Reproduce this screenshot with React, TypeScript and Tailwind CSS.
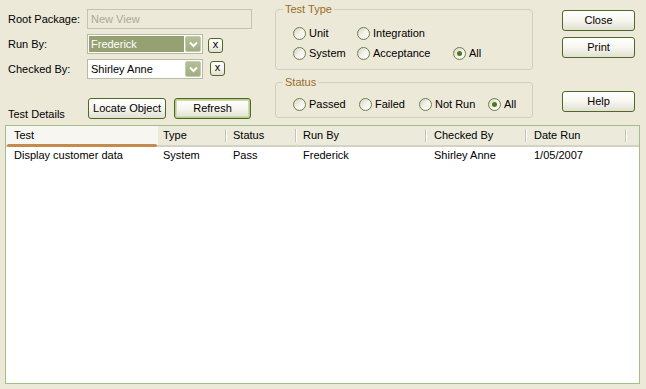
import React from 'react';

const Radio = ({ label, checked, className = '' }: { label: string; checked?: boolean; className?: string }) => (
  <div className={`flex items-center h-[14px] gap-[3px] shrink-0 ${className}`}>
    <span className="w-[13px] h-[13px] shrink-0 rounded-full border border-[#6a8248] bg-gradient-to-br from-[#d6d3c3] via-[#f3f2ec] to-white flex items-center justify-center">
      {checked && <span className="w-[5px] h-[5px] rounded-full bg-[#4b7a1c]" />}
    </span>
    <span className="leading-[13px] whitespace-nowrap">{label}</span>
  </div>
);

const Btn = ({ children, className = '', focused }: { children: React.ReactNode; className?: string; focused?: boolean }) => (
  <button
    className={`shrink-0 flex items-center justify-center rounded-[3px] border border-[#4c6a26] bg-gradient-to-b from-white via-[#f7f6ef] to-[#e2e0d2] text-[11px] leading-none text-black whitespace-nowrap ${
      focused ? 'shadow-[inset_0_0_0_1px_#b5cb8c,inset_0_0_0_2px_#cfdcb0]' : ''
    } ${className}`}
  >
    {children}
  </button>
);

const Chevron = () => (
  <svg width="9" height="7" viewBox="0 0 9 7">
    <path d="M1 1.5 L4.5 5 L8 1.5" fill="none" stroke="white" strokeWidth="2" />
  </svg>
);

const Combo = ({ value, selected }: { value: string; selected?: boolean }) => (
  <div className="shrink-0 w-[116px] h-[20px] border border-[#b7bba4] bg-white flex p-[1px] gap-[1px]">
    <div className={`flex-1 flex items-center pl-[2px] ${selected ? 'bg-[#95a172] text-white' : ''}`}>{value}</div>
    <div className="w-[16px] rounded-[2px] border border-[#c3cdab] bg-gradient-to-b from-[#b3bf96] to-[#a0ad82] flex items-center justify-center">
      <Chevron />
    </div>
  </div>
);

const ClearBtn = ({ className = '' }: { className?: string }) => (
  <Btn className={`w-[15px] h-[15px] rounded-[2px] pb-[2px] ${className}`}>x</Btn>
);

const columns = [
  { name: 'Test', w: 'w-[152px]', pad: 'pl-[8px]', val: 'Display customer data' },
  { name: 'Type', w: 'w-[69px]', pad: 'pl-[5px]', val: 'System' },
  { name: 'Status', w: 'w-[70px]', pad: 'pl-[6px]', val: 'Pass' },
  { name: 'Run By', w: 'w-[130px]', pad: 'pl-[6px]', val: 'Frederick' },
  { name: 'Checked By', w: 'w-[100px]', pad: 'pl-[7px]', val: 'Shirley Anne' },
  { name: 'Date Run', w: 'w-[100px]', pad: 'pl-[7px]', val: '1/05/2007' },
];

export default function App() {
  return (
    <div className="w-[646px] h-[389px] bg-[#ECE9D8] text-[11px] text-black font-['Liberation_Sans',Arial,sans-serif] overflow-hidden">
      {/* Top controls */}
      <div className="flex h-[125px]">
        {/* Left column */}
        <div className="ml-[8px] w-[244px] shrink-0 flex flex-col">
          <div className="mt-[9px] flex items-center h-[20px]">
            <span className="w-[79px] shrink-0 whitespace-nowrap">Root Package:</span>
            <div className="shrink-0 w-[165px] h-[20px] border border-[#c5c2b0] flex items-center pl-[3px] text-[#aca899]">New View</div>
          </div>
          <div className="mt-[5px] flex items-start h-[20px]">
            <span className="w-[79px] shrink-0 self-center">Run By:</span>
            <Combo value="Frederick" selected />
            <ClearBtn className="ml-[5px] mt-[4px]" />
          </div>
          <div className="mt-[5px] flex items-start h-[20px]">
            <span className="w-[79px] shrink-0 self-center whitespace-nowrap">Checked By:</span>
            <Combo value="Shirley Anne" />
            <ClearBtn className="ml-[7px] mt-[2px]" />
          </div>
          <div className="mt-[19px] flex items-start">
            <span className="w-[80px] shrink-0 mt-[10px] leading-[13px] whitespace-nowrap">Test Details</span>
            <Btn className="w-[78px] h-[21px]">Locate Object</Btn>
            <Btn className="ml-[8px] w-[77px] h-[21px]" focused>Refresh</Btn>
          </div>
        </div>

        {/* Middle column: option groups */}
        <div className="ml-[23px] w-[258px] shrink-0 flex flex-col">
          <fieldset className="mt-[3px] h-[67px] border border-[#d0d0bf] rounded-[4px]">
            <legend className="ml-[7px] px-[2px] leading-[12px] text-[#9a6c2c]">Test Type</legend>
            <div className="pl-[17px] pt-[11px] flex flex-col gap-[6px]">
              <div className="flex">
                <Radio label="Unit" className="w-[64px]" />
                <Radio label="Integration" />
              </div>
              <div className="flex">
                <Radio label="System" className="w-[64px]" />
                <Radio label="Acceptance" className="w-[96px]" />
                <Radio label="All" checked />
              </div>
            </div>
          </fieldset>
          <fieldset className="mt-[6px] h-[42px] border border-[#d0d0bf] rounded-[4px]">
            <legend className="ml-[7px] px-[2px] leading-[12px] text-[#9a6c2c]">Status</legend>
            <div className="pl-[17px] pt-[9px] flex">
              <Radio label="Passed" className="w-[66px]" />
              <Radio label="Failed" className="w-[60px]" />
              <Radio label="Not Run" className="w-[69px]" />
              <Radio label="All" checked />
            </div>
          </fieldset>
        </div>

        {/* Right column */}
        <div className="ml-[29px] w-[73px] shrink-0 flex flex-col">
          <Btn className="mt-[10px] h-[21px]">Close</Btn>
          <Btn className="mt-[6px] h-[21px]">Print</Btn>
          <Btn className="mt-[33px] h-[21px]">Help</Btn>
        </div>
      </div>

      {/* List view */}
      <div className="ml-[5px] w-[635px] h-[259px] border border-[#a3be86] bg-white flex flex-col">
        <div className="flex h-[21px] bg-[#ebeadb] border-b-2 border-[#d5d2c2]">
          {columns.map((c, i) => (
            <div
              key={c.name}
              className={`${c.w} shrink-0 relative flex items-center justify-between ${c.pad} ${i === 0 ? 'bg-[#f7f6f0]' : ''}`}
            >
              <span>{c.name}</span>
              {i > 0 && <span className="h-[13px] w-[2px] border-l border-[#c7c5b2] border-r border-r-white" />}
              {i === 0 && <span className="absolute left-[1px] right-[1px] bottom-[-2px] h-[3px] rounded-full bg-[#c58a4e]" />}
            </div>
          ))}
        </div>
        <div className="flex h-[16px] items-center">
          {columns.map((c) => (
            <div key={c.name} className={`${c.w} shrink-0 ${c.pad} whitespace-nowrap`}>
              {c.val}
            </div>
          ))}
        </div>
      </div>
    </div>
  );
}
